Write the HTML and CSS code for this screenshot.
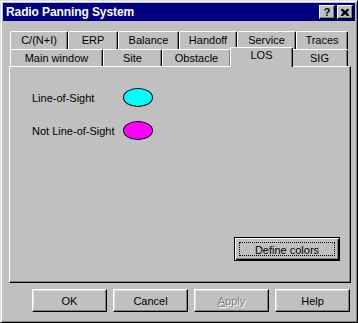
FILE: index.html
```html
<!DOCTYPE html>
<html lang="en">
<head>
    <meta charset="UTF-8">
    <title>Radio Panning System</title>
    <link rel="stylesheet" href="styles.css">
</head>
<body>

    <div class="window">
        <div class="titlebar">
            <span class="title">Radio Panning System</span>
            <div class="title-buttons">
                <button class="tbtn help-btn">?</button>
                <button class="tbtn">
                    <svg width="8" height="7" viewBox="0 0 8 7">
                        <path d="M0 0h2l2 2 2-2h2v1l-2 2.5 2 2.5v1h-2l-2-2-2 2h-2v-1l2-2.5-2-2.5z" fill="#000"/>
                    </svg>
                </button>
            </div>
        </div>

        <div class="body">
            <div class="tabs">
                <div class="tab-row back">
                    <div class="tab">C/(N+I)</div>
                    <div class="tab">ERP</div>
                    <div class="tab">Balance</div>
                    <div class="tab">Handoff</div>
                    <div class="tab">Service</div>
                    <div class="tab">Traces</div>
                </div>
                <div class="tab-row front">
                    <div class="tab">Main window</div>
                    <div class="tab">Site</div>
                    <div class="tab">Obstacle</div>
                    <div class="tab active">LOS</div>
                    <div class="tab">SIG</div>
                </div>
            </div>

            <div class="panel">
                <div class="legend-row">
                    <span class="legend-label">Line-of-Sight</span>
                    <span class="swatch los"></span>
                </div>
                <div class="legend-row">
                    <span class="legend-label">Not Line-of-Sight</span>
                    <span class="swatch nlos"></span>
                </div>
                <div class="panel-actions">
                    <button class="btn default"><span class="focus">Define colors</span></button>
                </div>
            </div>

            <div class="dialog-buttons">
                <button class="btn">OK</button>
                <button class="btn">Cancel</button>
                <button class="btn disabled"><u>A</u>pply</button>
                <button class="btn">Help</button>
            </div>
        </div>
    </div>

</body>
</html>
```

FILE: styles.css
```css
body { margin: 0; padding: 0; background-color: #c0c0c0; font-family: "Liberation Sans", Arial, sans-serif; font-size: 11px; color: #000; }
button { font-family: inherit; font-size: 11px; color: #000; }

.window { width: 358px; height: 323px; box-sizing: border-box; background-color: #c0c0c0; border: 1px solid; border-color: #dfdfdf #000 #000 #dfdfdf; box-shadow: inset 1px 1px #fff, inset -1px -1px #808080; padding: 2px; }

.titlebar { height: 18px; background-color: #000080; color: #fff; display: flex; align-items: center; justify-content: space-between; padding: 0 2px 0 3px; }
.title { font-weight: bold; font-size: 12px; letter-spacing: -0.1px; }
.title-buttons { display: flex; gap: 2px; }
.tbtn { width: 16px; height: 14px; padding: 0; background-color: #c0c0c0; border: 1px solid; border-color: #fff #000 #000 #fff; box-shadow: inset -1px -1px #808080; display: flex; align-items: center; justify-content: center; }
.help-btn { font-weight: bold; font-size: 11px; line-height: 1; }

.body { padding: 10px 3px 0 6px; }

.tabs { margin-left: 1px; width: 338px; }
.tab-row { display: flex; }
.tab { box-sizing: border-box; border-left: 1px solid #fff; border-top: 1px solid #fff; border-right: 1px solid #000; border-radius: 2px 2px 0 0; box-shadow: inset -1px 0 #808080; background-color: #c0c0c0; text-align: center; }
.back .tab { height: 18px; line-height: 17px; }
.front .tab { height: 17px; line-height: 16px; }

.back .tab:nth-child(1) { width: 58px; }
.back .tab:nth-child(2) { width: 50px; }
.back .tab:nth-child(3) { width: 61px; }
.back .tab:nth-child(4) { width: 58px; }
.back .tab:nth-child(5) { width: 59px; }
.back .tab:nth-child(6) { width: 52px; }

.front .tab:nth-child(1) { width: 93px; }
.front .tab:nth-child(2) { width: 59px; }
.front .tab:nth-child(3) { width: 69px; }
.front .tab:nth-child(4) { width: 60px; }
.front .tab:nth-child(5) { width: 57px; }

.front .tab.active { width: 63px; height: 20px; line-height: 15px; margin: -2px -2px -1px -1px; position: relative; z-index: 1; }

.panel { width: 342px; height: 217px; box-sizing: border-box; border: 1px solid; border-color: #fff #000 #000 #fff; box-shadow: inset -1px -1px #808080; padding: 21px 10px 21px 22px; display: flex; flex-direction: column; gap: 14px; }
.legend-row { display: flex; align-items: center; height: 19px; }
.legend-label { width: 91px; }
.swatch { width: 30px; height: 19px; box-sizing: border-box; border: 1px solid #000; border-radius: 50%; }
.los { background-color: #00ffff; }
.nlos { background-color: #ff00ff; }
.panel-actions { margin-top: auto; display: flex; justify-content: flex-end; }

.btn { width: 75px; height: 23px; padding: 0; background-color: #c0c0c0; border: 1px solid; border-color: #fff #000 #000 #fff; box-shadow: inset -1px -1px #808080, inset 1px 1px #dfdfdf; }
.btn.default { width: 106px; height: 24px; border: 1px solid #000; box-shadow: inset 1px 1px #fff, inset -1px -1px #000, inset -2px -2px #808080; padding: 4px; }
.focus { display: block; height: 100%; box-sizing: border-box; border: 1px dotted #000; line-height: 14px; }
.btn.disabled { color: #808080; text-shadow: 1px 1px #fff; }

.dialog-buttons { display: flex; justify-content: flex-end; gap: 6px; margin-top: 6px; padding-right: 2px; }
```
